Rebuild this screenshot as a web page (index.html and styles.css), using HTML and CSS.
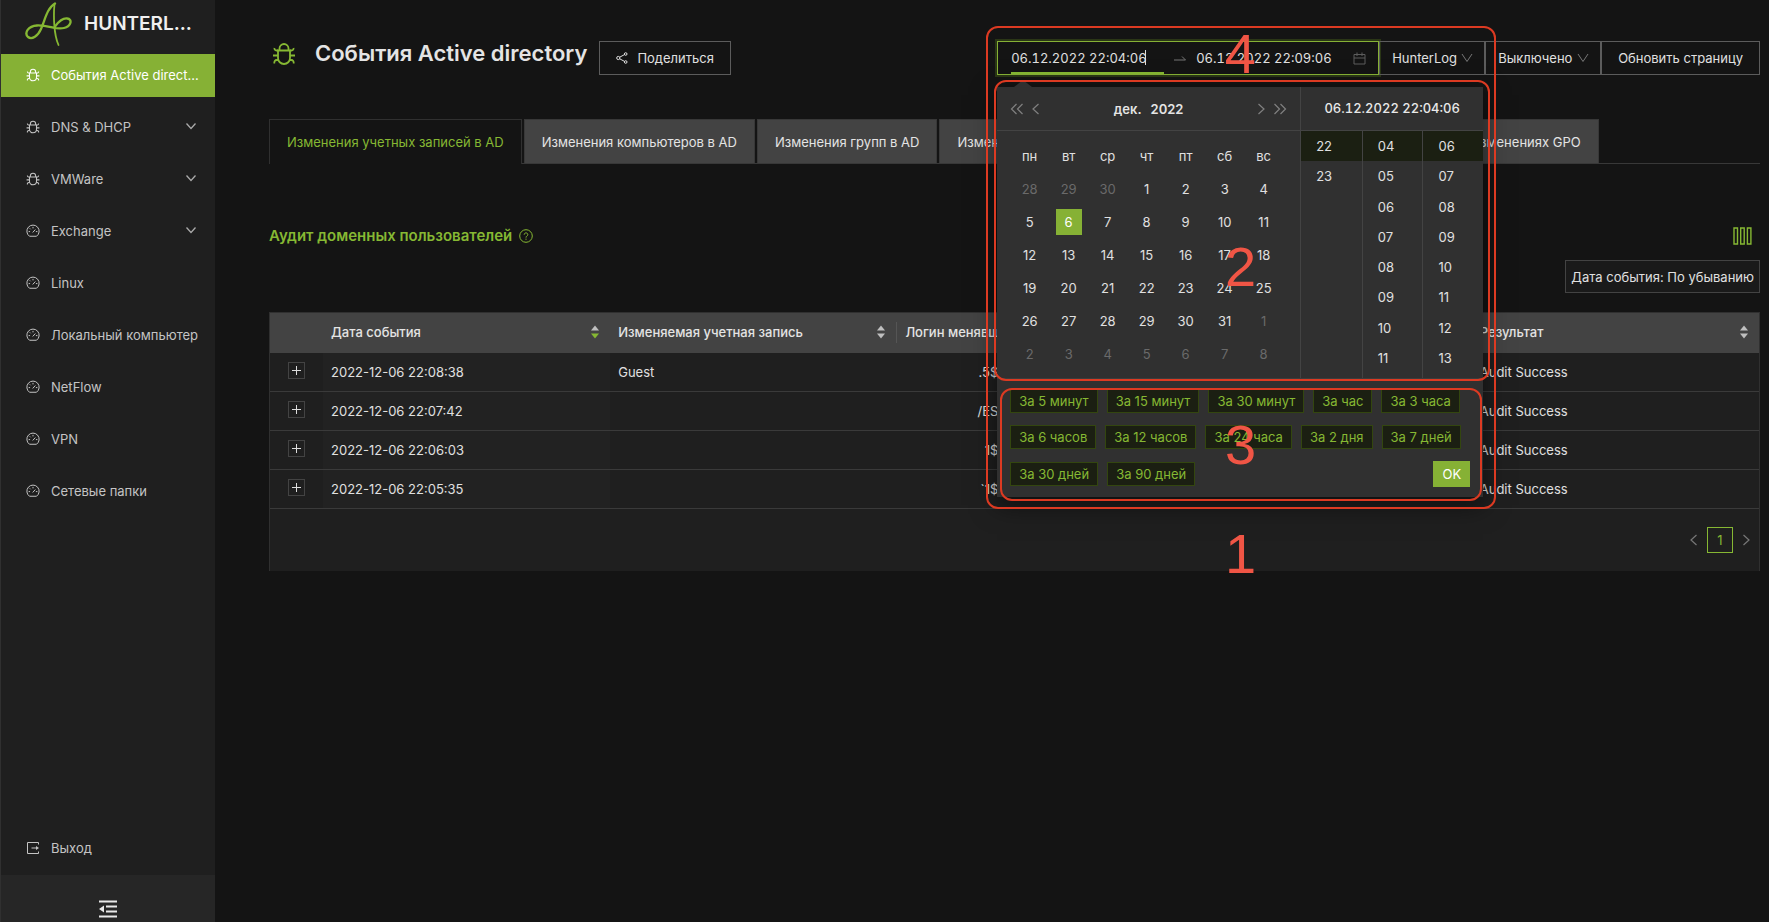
FILE: index.html
```html
<!DOCTYPE html>
<html lang="ru">
<head>
<meta charset="utf-8">
<title>События Active directory</title>
<link rel="stylesheet" href="styles.css">
</head>
<body>
<svg class="defs" aria-hidden="true">
  <symbol id="bug" viewBox="0 0 24 24"><g fill="none" stroke="currentColor" stroke-width="1.8"><path d="M6 8.500h12v7.500a6 6 0 0 1-12 0z"/><path d="M7.500 8.500V6.500a4.500 4.500 0 0 1 9 0v2"/><path d="M6 8.500H4.500a2 2 0 0 1-2-2.500M18 8.500h1.500a2 2 0 0 0 2-2.500M6 13.500H1M18 13.500h5M6.500 18H5a2.500 2.500 0 0 0-2.500 3.500M17.500 18H19a2.500 2.500 0 0 1 2.500 3.500"/></g></symbol>
  <symbol id="dash" viewBox="0 0 24 24"><g fill="none" stroke="currentColor" stroke-width="1.7"><path d="M6 21a10.500 10.500 0 1 1 12 0z"/><path d="M11.500 14.500L16 9.500M12 5v2.500M6.500 7.500L8 9M4.500 13H7M17 13h2.500"/></g></symbol>
  <symbol id="down" viewBox="0 0 12 12"><path d="M1.500 3.500L6 8.500l4.500-5" fill="none" stroke="currentColor" stroke-width="1.3"/></symbol>
  <symbol id="open" viewBox="0 0 12 12"><path d="M1 2l5 7.500L11 2" fill="none" stroke="currentColor"/></symbol>
  <symbol id="prev" viewBox="0 0 12 12"><path d="M8.500 1L3 6l5.500 5" fill="none" stroke="currentColor" stroke-width="1.2"/></symbol>
  <symbol id="next" viewBox="0 0 12 12"><path d="M3.500 1L9 6l-5.500 5" fill="none" stroke="currentColor" stroke-width="1.2"/></symbol>
  <symbol id="prev2" viewBox="0 0 14 12"><path d="M6.500 1L1.500 6l5 5M12.500 1L7.500 6l5 5" fill="none" stroke="currentColor" stroke-width="1.2"/></symbol>
  <symbol id="next2" viewBox="0 0 14 12"><path d="M1.500 1l5 5-5 5M7.500 1l5 5-5 5" fill="none" stroke="currentColor" stroke-width="1.2"/></symbol>
  <symbol id="sort" viewBox="0 0 10 14"><path class="up" d="M1 5.500L5 .5l4 5z"/><path class="dn" d="M1 8.500l4 5 4-5z"/></symbol>
</svg>
<div class="app">
  <aside class="side">
    <div class="brand">
      <svg class="logo" viewBox="0 0 48 44" fill="none" stroke="#86b833" stroke-linecap="round"><path d="M30 1.500C22 6 20 18 16 27c-3 7-9 11-13 8-4-4 0-11 9-11.500 12-.5 18 4.500 27 2.500 7-1.500 9-9 3-9.500-5-.5-9 4-12 8" stroke-width="2.300"/><path d="M29.500 2c-1 10-1 30 4 41" stroke-width="1.800"/></svg>
      <span>HUNTERL...</span>
    </div>
    <nav class="menu">
      <a href="#" class="item active"><svg class="ico"><use href="#bug"/></svg><span>События Active direct...</span></a>
      <a href="#" class="item"><svg class="ico"><use href="#bug"/></svg><span>DNS &amp; DHCP</span><svg class="chev"><use href="#down"/></svg></a>
      <a href="#" class="item"><svg class="ico"><use href="#bug"/></svg><span>VMWare</span><svg class="chev"><use href="#down"/></svg></a>
      <a href="#" class="item"><svg class="ico"><use href="#dash"/></svg><span>Exchange</span><svg class="chev"><use href="#down"/></svg></a>
      <a href="#" class="item"><svg class="ico"><use href="#dash"/></svg><span>Linux</span></a>
      <a href="#" class="item"><svg class="ico"><use href="#dash"/></svg><span>Локальный компьютер</span></a>
      <a href="#" class="item"><svg class="ico"><use href="#dash"/></svg><span>NetFlow</span></a>
      <a href="#" class="item"><svg class="ico"><use href="#dash"/></svg><span>VPN</span></a>
      <a href="#" class="item"><svg class="ico"><use href="#dash"/></svg><span>Сетевые папки</span></a>
      <a href="#" class="item exit"><svg class="ico" viewBox="0 0 14 14" fill="none" stroke="currentColor"><path d="M12.500 3.500v-2h-11v11h11v-2"/><path d="M5.500 7h5"/><path d="M10 5l3 2-3 2z" fill="currentColor" stroke="none"/></svg><span>Выход</span></a>
    </nav>
    <button class="fold" aria-label="Свернуть меню"><svg viewBox="0 0 18 18" fill="none" stroke="#e8e8e8" stroke-width="1.800"><path d="M0 1.500h18M7 6.500h11M7 11.500h11M0 16.500h18"/><path d="M0 9l5-3.500v7z" fill="#e8e8e8" stroke="none"/></svg></button>
  </aside>
  <main class="main">
    <header class="top">
      <svg class="title-ico"><use href="#bug"/></svg>
      <h1>События Active directory</h1>
      <button class="btn share"><svg viewBox="0 0 12 12" fill="none" stroke="currentColor"><circle cx="2.300" cy="6" r="1.600"/><circle cx="9.700" cy="2" r="1.300"/><circle cx="9.700" cy="10" r="1.300"/><path d="M3.700 5.200l4.800-2.600M3.700 6.800l4.800 2.600"/></svg>Поделиться</button>
      <div class="tools">
        <div class="range">
          <input type="text" class="from" value="06.12.2022 22:04:06" aria-label="Начало периода">
          <svg class="arrow" viewBox="0 0 12 6"><path d="M0 5h11.500L8 1.500" fill="none" stroke="#777"/></svg>
          <input type="text" class="to" value="06.12.2022 22:09:06" aria-label="Конец периода">
          <svg class="cal-ico" viewBox="0 0 13 13" fill="none" stroke="#5c5c5c"><path d="M1 2.500h11v9.500H1zM1 6h11M4 .5v3.500M9 .5v3.500"/></svg>
          <section class="picker" aria-label="Выбор периода">
            <div class="panels">
              <div class="dates">
                <div class="cal-head">
                  <button aria-label="Предыдущий год"><svg class="dbl"><use href="#prev2"/></svg></button>
                  <button aria-label="Предыдущий месяц"><svg><use href="#prev"/></svg></button>
                  <strong>дек.<span>2022</span></strong>
                  <button aria-label="Следующий месяц"><svg><use href="#next"/></svg></button>
                  <button aria-label="Следующий год"><svg class="dbl"><use href="#next2"/></svg></button>
                </div>
                <table class="cal">
                  <thead><tr><th>пн</th><th>вт</th><th>ср</th><th>чт</th><th>пт</th><th>сб</th><th>вс</th></tr></thead>
                  <tbody>
                    <tr><td class="out">28</td><td class="out">29</td><td class="out">30</td><td>1</td><td>2</td><td>3</td><td>4</td></tr>
                    <tr><td>5</td><td><span class="sel">6</span></td><td>7</td><td>8</td><td>9</td><td>10</td><td>11</td></tr>
                    <tr><td>12</td><td>13</td><td>14</td><td>15</td><td>16</td><td>17</td><td>18</td></tr>
                    <tr><td>19</td><td>20</td><td>21</td><td>22</td><td>23</td><td>24</td><td>25</td></tr>
                    <tr><td>26</td><td>27</td><td>28</td><td>29</td><td>30</td><td>31</td><td class="out">1</td></tr>
                    <tr><td class="out">2</td><td class="out">3</td><td class="out">4</td><td class="out">5</td><td class="out">6</td><td class="out">7</td><td class="out">8</td></tr>
                  </tbody>
                </table>
              </div>
              <div class="time">
                <div class="time-head">06.12.2022 22:04:06</div>
                <div class="cols">
                  <ul><li class="on">22</li><li>23</li></ul>
                  <ul><li class="on">04</li><li>05</li><li>06</li><li>07</li><li>08</li><li>09</li><li>10</li><li>11</li></ul>
                  <ul><li class="on">06</li><li>07</li><li>08</li><li>09</li><li>10</li><li>11</li><li>12</li><li>13</li></ul>
                </div>
              </div>
            </div>
            <div class="presets">
              <button>За 5 минут</button><button>За 15 минут</button><button>За 30 минут</button><button>За час</button><button>За 3 часа</button>
              <button>За 6 часов</button><button>За 12 часов</button><button>За 24 часа</button><button>За 2 дня</button><button>За 7 дней</button>
              <button>За 30 дней</button><button>За 90 дней</button><button class="ok">OK</button>
            </div>
          </section>
        </div>
        <label class="pick host"><select aria-label="Источник"><option>HunterLog</option></select><svg><use href="#open"/></svg></label>
        <label class="pick auto"><select aria-label="Автообновление"><option>Выключено</option></select><svg><use href="#open"/></svg></label>
        <button class="btn refresh">Обновить страницу</button>
      </div>
    </header>
    <div class="tabs" role="tablist">
      <button role="tab" class="tab current" aria-selected="true">Изменения учетных записей в AD</button>
      <button role="tab" class="tab">Изменения компьютеров в AD</button>
      <button role="tab" class="tab">Изменения групп в AD</button>
      <button role="tab" class="tab wide">Изменения групповых политик</button>
      <button role="tab" class="tab">Информация об изменениях GPO</button>
    </div>
    <div class="bar">
      <h2>Аудит доменных пользователей <svg viewBox="0 0 14 14" fill="none" stroke="currentColor"><circle cx="7" cy="7" r="6.300"/><path d="M5.200 5.700c0-2.400 3.600-2.400 3.600 0C8.800 7 7 7 7 8.600M7 9.600v1.200"/></svg></h2>
      <button class="columns" aria-label="Колонки"><svg viewBox="0 0 19 18" fill="none" stroke="#86b833" stroke-width="1.400"><path d="M1 1h3.500v16H1zM7.700 1h3.500v16H7.700zM14.400 1h3.500v16h-3.500z"/></svg></button>
    </div>
    <div class="order"><button class="btn order-btn">Дата события: По убыванию</button></div>
    <div class="card">
      <table class="grid">
        <colgroup><col class="c-exp"><col><col><col><col><col></colgroup>
        <thead><tr>
          <th></th>
          <th><div>Дата события<svg class="sort desc"><use href="#sort"/></svg></div></th>
          <th><div class="sep">Изменяемая учетная запись<svg class="sort"><use href="#sort"/></svg></div></th>
          <th><div>Логин менявшего<svg class="sort"><use href="#sort"/></svg></div></th>
          <th></th>
          <th><div>Результат<svg class="sort"><use href="#sort"/></svg></div></th>
        </tr></thead>
        <tbody>
          <tr><td><button class="plus" aria-label="Развернуть"></button></td><td class="sorted">2022-12-06 22:08:38</td><td>Guest</td><td><span class="login">.5$</span></td><td></td><td>Audit Success</td></tr>
          <tr><td><button class="plus" aria-label="Развернуть"></button></td><td class="sorted">2022-12-06 22:07:42</td><td></td><td><span class="login">/ES</span></td><td></td><td>Audit Success</td></tr>
          <tr><td><button class="plus" aria-label="Развернуть"></button></td><td class="sorted">2022-12-06 22:06:03</td><td></td><td><span class="login">1$</span></td><td></td><td>Audit Success</td></tr>
          <tr><td><button class="plus" aria-label="Развернуть"></button></td><td class="sorted">2022-12-06 22:05:35</td><td></td><td><span class="login">`1$</span></td><td></td><td>Audit Success</td></tr>
        </tbody>
      </table>
      <div class="pager">
        <button aria-label="Назад"><svg><use href="#prev"/></svg></button>
        <button class="page">1</button>
        <button aria-label="Вперёд"><svg><use href="#next"/></svg></button>
      </div>
    </div>
  </main>
  <div class="mark m1"><span>1</span></div>
  <div class="mark m2"><span>2</span></div>
  <div class="mark m3"><span>3</span></div>
  <div class="num4">4</div>
</div>
</body>
</html>
```
FILE: styles.css
```css
* { box-sizing: border-box; }
body { margin: 0; background: #141414; color: #e0e0e0; font: 13px/20px Inter, "Noto Sans", sans-serif; }
button, input, select { font: inherit; color: inherit; background: none; border: 0; padding: 0; margin: 0; }
h1, h2, ul { margin: 0; padding: 0; list-style: none; }
table { border-spacing: 0; table-layout: fixed; }
.defs { display: none; }
.app { display: flex; min-height: 100vh; position: relative; overflow: hidden; }

.side { width: 215px; flex: none; background: #1f1f1f; display: flex; flex-direction: column; border-left: 1px solid #303030; }
.brand { height: 54px; display: flex; align-items: center; gap: 11px; padding: 0 0 7px 24px; font-size: 19px; font-weight: 600; color: #f0f0f0; white-space: nowrap; }
.logo { width: 48px; height: 44px; }
.menu { flex: 1; display: flex; flex-direction: column; gap: 9px; padding-bottom: 5px; }
.item { height: 43px; display: flex; align-items: center; gap: 11px; padding: 0 14px 2px 25px; color: #c4c4c4; text-decoration: none; white-space: nowrap; }
.item span { flex: 1; overflow: hidden; text-overflow: ellipsis; }
.active { background: #86b135; color: #fff; }
.ico { width: 14px; height: 14px; flex: none; }
.chev { width: 12px; height: 12px; flex: none; margin: 0 4px 2px 0; color: #aaa; }
.exit { margin-top: auto; }
.fold { height: 47px; background: #262626; display: flex; justify-content: center; padding-top: 25px; }
.fold svg { width: 18px; height: 18px; }

.main { flex: 1; min-width: 0; padding: 41px 9px 0 54px; }
.top { display: flex; height: 35px; align-items: flex-start; }
.title-ico { width: 24px; height: 24px; margin: 1px 19px 0 3px; color: #86b833; }
h1 { font-size: 22px; line-height: 28px; margin-top: -2px; font-weight: 600; color: #e4e4e4; white-space: nowrap; }
.btn { height: 34px; border: 1px solid #5c5c5c; white-space: nowrap; }
.share { display: flex; align-items: center; gap: 9px; padding: 0 16px; margin-left: 12px; }
.share svg { width: 12px; height: 12px; }
.tools { margin-left: auto; display: flex; }
.range { position: relative; width: 382px; height: 34px; border: 1px solid #86b135; box-shadow: 0 0 0 2px #2a3616; display: flex; align-items: center; padding: 0 12px 0 13px; }
.range input { outline: none; height: 32px; font-variant-numeric: tabular-nums; }
.from { width: 153px; border-bottom: 2px solid #86b833; padding-top: 1px; background: linear-gradient(#ddd, #ddd) 134px center / 1px 15px no-repeat; }
.arrow { width: 12px; height: 6px; margin: 0 10px 0 10px; }
.to { flex: 1; min-width: 0; }
.cal-ico { width: 13px; height: 13px; }
.pick { position: relative; display: flex; align-items: center; height: 34px; border: 1px solid #5c5c5c; }
.pick select { appearance: none; height: 32px; width: 100%; padding-left: 12px; outline: none; }
.pick svg { position: absolute; right: 11px; width: 12px; height: 12px; color: #777; pointer-events: none; }
.host { width: 106px; }
.auto { width: 116px; }
.refresh { padding: 0 16px; }

.picker { position: absolute; z-index: 2; left: -1px; top: 45px; width: 486px; background: #303030; box-shadow: 0 8px 24px rgba(0, 0, 0, .55); }
.picker::before { content: ""; position: absolute; left: 17px; top: -7px; border: solid transparent; border-width: 0 9px 7px; border-bottom-color: #303030; }
.panels { display: flex; border-bottom: 1px solid #3c3c3c; }
.dates { width: 304px; border-right: 1px solid #434343; }
.cal-head { height: 44px; display: flex; align-items: center; gap: 6px; padding: 0 13px; border-bottom: 1px solid #434343; color: #808080; }
.cal-head strong { flex: 1; text-align: center; font-weight: 600; color: #e4e4e4; }
.cal-head strong span { margin-left: 9px; }
.cal-head button { display: flex; }
.cal-head svg { width: 12px; height: 12px; }
.cal-head .dbl { width: 14px; }
.cal { width: 273px; margin: 9px 0 8px 13px; }
.cal th, .cal td { padding: 0; height: 33px; font-weight: 400; text-align: center; }
.cal th { height: 32px; }
.cal .out { color: #6a6a6a; }
.sel { display: block; width: 26px; margin: 0 auto; line-height: 26px; background: #86b135; color: #fff; }
.time { flex: 1; display: flex; flex-direction: column; }
.time-head { height: 44px; line-height: 42px; text-align: center; font-weight: 500; font-variant-numeric: tabular-nums; color: #e8e8e8; border-bottom: 1px solid #434343; }
.cols { flex: 1; display: grid; grid-template-columns: 1fr 1fr 1fr; }
.cols ul { padding-bottom: 5px; display: grid; grid-template-rows: repeat(8, 1fr); }
.cols ul + ul { border-left: 1px solid #434343; }
.cols li { display: flex; align-items: center; padding-left: 15px; }
.cols .on { background: #1b1f12; }
.presets { display: flex; flex-wrap: wrap; align-items: center; gap: 12px 9px; padding: 10px 13px; }
.presets button { height: 24px; padding: 0 8px; border: 1px solid #33460f; background: #1b1f12; color: #86b833; }
.presets .ok { margin-left: auto; height: 26px; background: #86b135; border-color: #86b135; color: #fff; }

.tabs { display: flex; gap: 2px; margin-top: 43px; border-bottom: 1px solid #383838; }
.tab { height: 44px; padding: 0 17px; background: #434343; border: 1px solid #383838; border-bottom: 0; white-space: nowrap; color: #e4e4e4; }
.tab.current { height: 45px; margin-bottom: -1px; background: #141414; border-color: #303030; color: #86b833; }
.wide { width: 408px; text-align: left; }
.bar { display: flex; justify-content: space-between; align-items: center; height: 20px; margin-top: 62px; padding-right: 8px; }
h2 { font-size: 15px; line-height: 20px; font-weight: 600; color: #86b833; display: flex; align-items: center; gap: 7px; }
h2 svg { width: 14px; height: 14px; }
.columns { display: flex; }
.columns svg { width: 19px; height: 18px; }
.order { display: flex; justify-content: flex-end; margin: 14px 0 19px; }
.order-btn { height: 33px; padding: 0 5px; border-color: #434343; background: #1a1a1a; }

.card { background: #1f1f1f; border: 1px solid #303030; border-bottom: 0; }
.grid { width: 100%; }
.c-exp { width: 53px; }
.grid th { height: 40px; padding: 0 0 2px; background: #434343; text-align: left; font-weight: 500; color: #e4e4e4; white-space: nowrap; }
.grid th div { display: flex; align-items: center; justify-content: space-between; height: 21px; padding: 0 10px 0 8px; }
.grid .sep { border-right: 1px solid #555; }
.sort { width: 10px; height: 14px; fill: #bfbfbf; --down: #bfbfbf; }
.sort.desc { --down: #86b833; }
.dn { fill: var(--down); }
.grid td { height: 39px; padding: 0 8px; border-bottom: 1px solid #3a3a3a; }
.grid td:first-child { padding: 0; }
.grid .sorted { background: #222; }
.login { display: inline-block; width: 93px; text-align: right; }
.plus { display: block; width: 17px; height: 17px; margin: 0 auto 3px; border: 1px solid #434343; background: linear-gradient(#ddd, #ddd) center / 9px 1px no-repeat, linear-gradient(#ddd, #ddd) center / 1px 9px no-repeat; }
.pager { display: flex; justify-content: flex-end; align-items: center; gap: 7px; padding: 18px 7px; }
.pager button { display: flex; color: #777; }
.pager svg { width: 12px; height: 14px; }
.pager .page { width: 26px; height: 26px; border: 1px solid #86b833; color: #86b833; align-items: center; justify-content: center; }

.mark { position: absolute; z-index: 3; border: 2px solid #dc3a22; border-radius: 12px; pointer-events: none; }
.mark span, .num4 { position: absolute; font: 56px/56px "Liberation Sans", Arial, sans-serif; color: #f05545; }
.m1 { top: 26px; right: 273px; width: 510px; height: 483px; }
.m2 { top: 80px; right: 279px; width: 496px; height: 301px; }
.m3 { top: 388px; right: 287px; width: 482px; height: 113px; }
.m1 span { left: 237px; top: 498px; }
.m2 span { left: 229px; top: 157px; }
.m3 span { left: 223px; top: 27px; }
.num4 { z-index: 3; top: 26px; right: 513px; }
```
